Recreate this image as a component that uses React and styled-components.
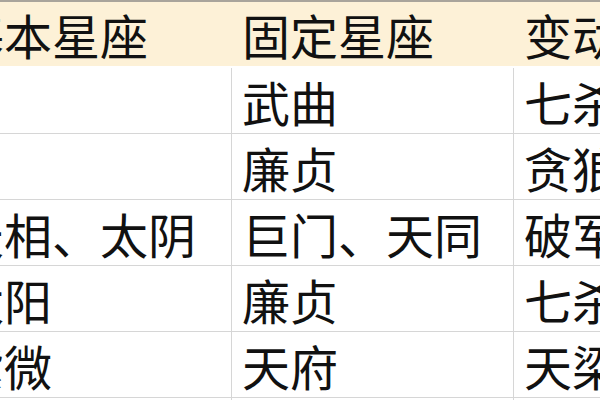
import React from "react";
import styled, { createGlobalStyle } from "styled-components";

const Global = createGlobalStyle`
  html, body { margin: 0; padding: 0; background: #ffffff; overflow: hidden; }
  body { width: 600px; height: 400px; }
`;

const Table = styled.div`
  display: grid;
  grid-template-columns: 286px 282px 282px;
  grid-auto-rows: 66px;
  margin-left: -54px;
  width: 850px;
  border-top: 2px solid #a9a49b;
  font-family: "Noto Sans CJK SC", "Noto Sans", sans-serif;
  color: #111111;
`;

const Cell = styled.div`
  box-sizing: border-box;
  display: flex;
  align-items: center;
  padding-left: 10px;
  font-size: 48px;
  line-height: 1;
  white-space: nowrap;
  overflow: hidden;
  background: ${(p) => (p.$head ? "#fdf1d7" : "#ffffff")};
  border-bottom: 1px solid ${(p) => (p.$head ? "#fdf1d7" : "#d6d6d6")};
  border-right: 1px solid ${(p) => (p.$head ? "#fdf1d7" : "#d6d6d6")};
  height: ${(p) => (p.$head ? "64px" : "66px")};
`;

const head = ["基本星座", "固定星座", "变动星座"];
const rows = [
  ["", "武曲", "七杀"],
  ["", "廉贞", "贪狼"],
  ["天相、太阴", "巨门、天同", "破军"],
  ["太阳", "廉贞", "七杀"],
  ["紫微", "天府", "天梁"],
  ["", "", ""],
];

export default function App() {
  return (
    <>
      <Global />
      <Table>
        {head.map((h) => (
          <Cell key={h} $head>
            {h}
          </Cell>
        ))}
        {rows.map((r, i) =>
          r.map((c, j) => <Cell key={i + "-" + j}>{c}</Cell>)
        )}
      </Table>
    </>
  );
}
